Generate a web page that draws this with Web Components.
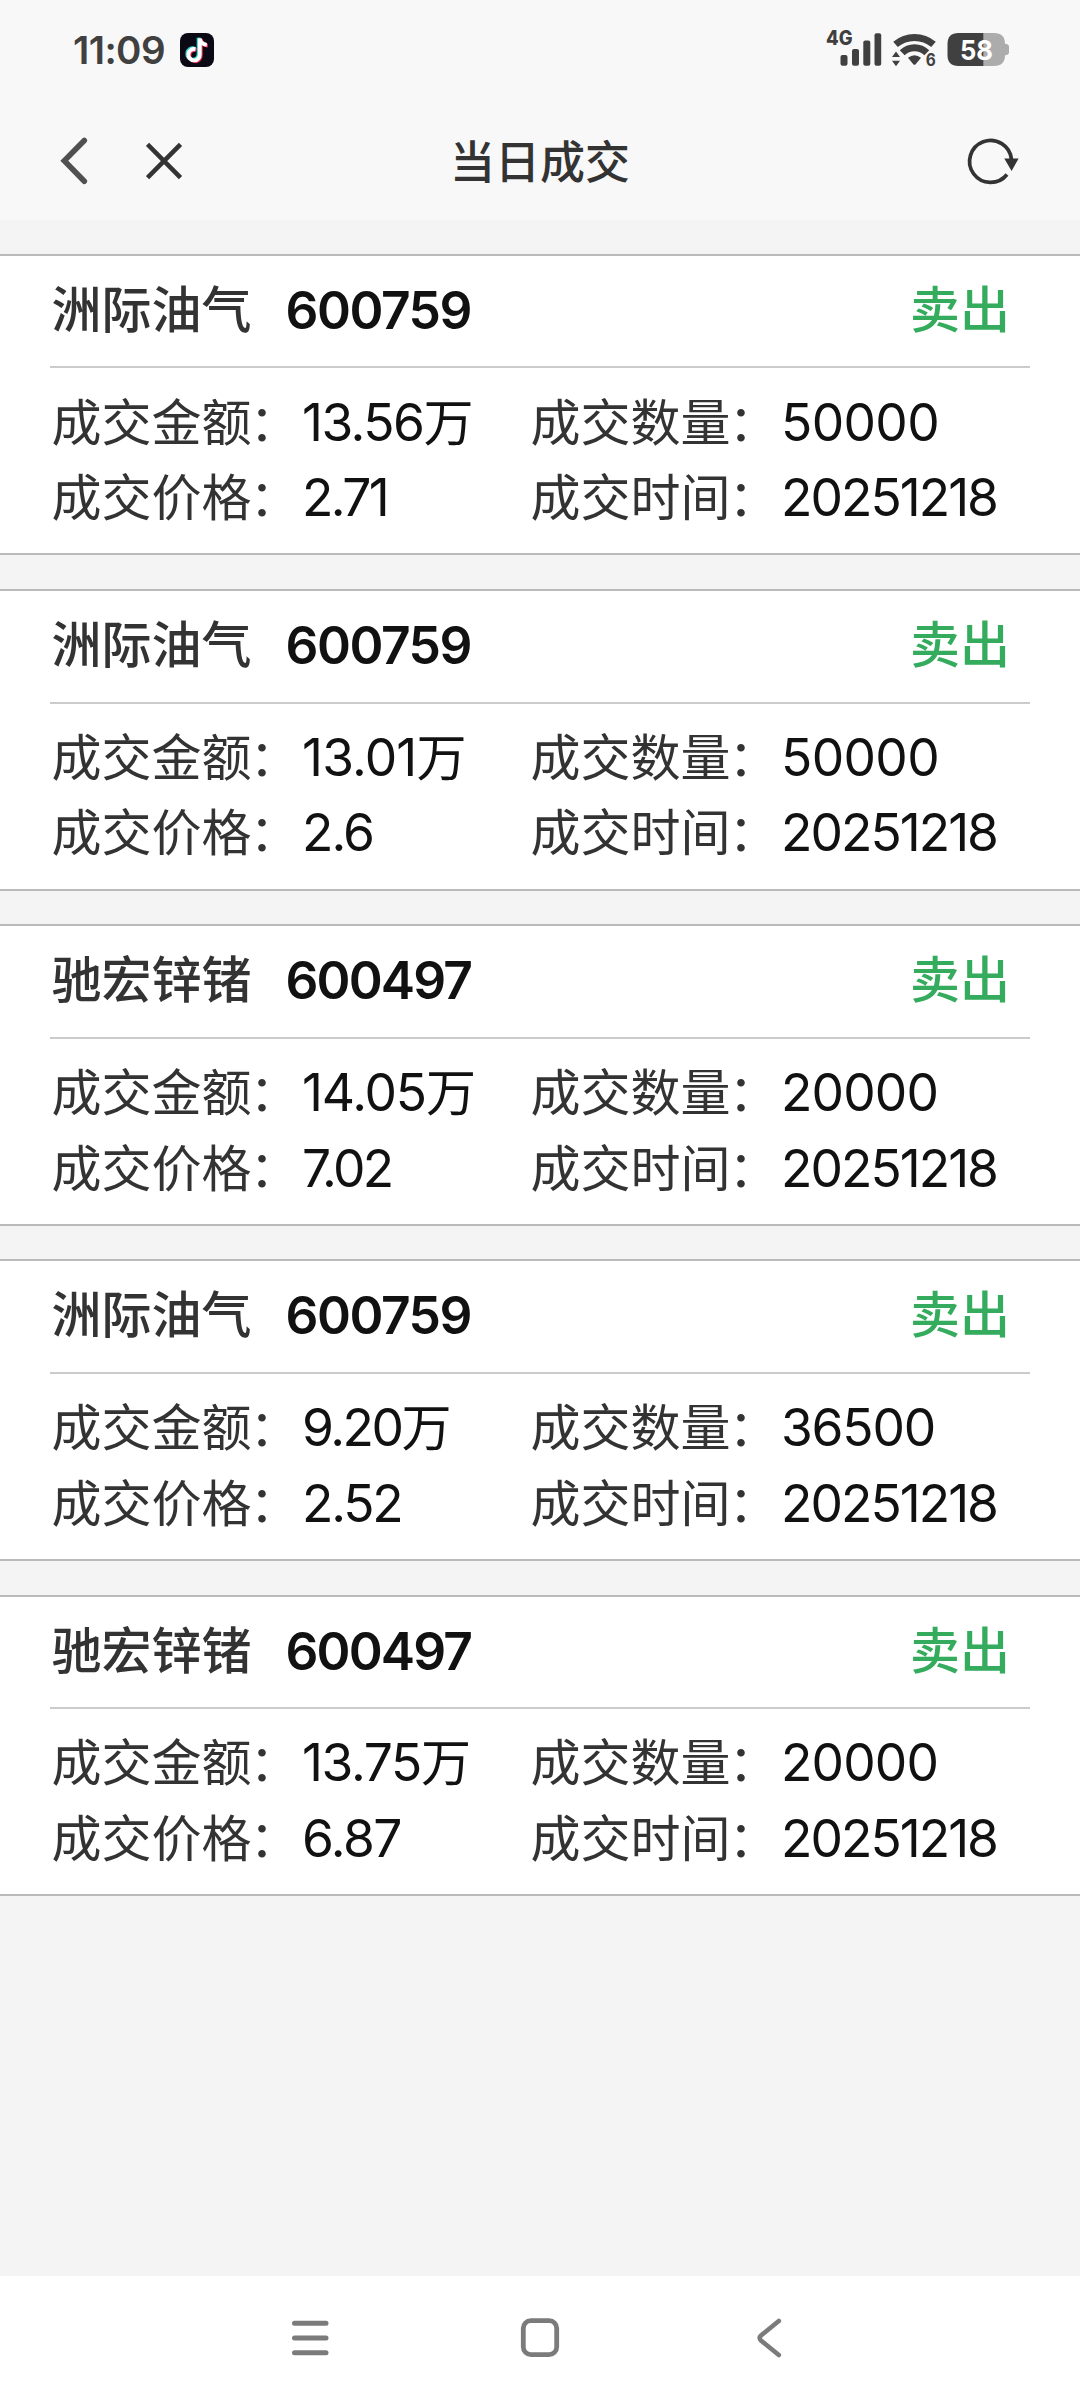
<!DOCTYPE html>
<html lang="zh-CN">
<head>
<meta charset="utf-8">
<title>当日成交</title>
<style>
html,body{margin:0;padding:0}
body{width:1080px;height:2400px;overflow:hidden;background:#f4f4f4;font-family:Inter,"Noto Sans CJK SC",sans-serif;color:#333}
</style>
</head>
<body>
<trade-app></trade-app>
<script>
const define = (name, html, init) => customElements.define(name, class extends HTMLElement {
  constructor() {
    super();
    this.attachShadow({ mode: 'open' }).innerHTML = html;
  }
  connectedCallback() { if (init) init(this, this.shadowRoot); }
});

// Text whose letter spacing is tuned so its advance equals the "width" attribute.
define('fit-text', `<style>:host{display:inline-block;white-space:nowrap;line-height:1}</style><span><slot></slot></span>`, (el, root) => {
  const w = parseFloat(el.getAttribute('width'));
  if (!w) return;
  const span = root.querySelector('span');
  span.style.letterSpacing = '0px';
  const natural = span.getBoundingClientRect().width;
  const n = el.textContent.length;
  span.style.letterSpacing = ((w - natural) / n).toFixed(3) + 'px';
});

define('status-bar', `<style>
:host{display:flex;height:100px;box-sizing:border-box;padding:0 71px 0 73px;align-items:center;background:#f8f8f8;color:#404040}
.time{font-size:38.5px;font-weight:600;width:107px;line-height:100px}
.sp{flex:1}
svg{display:block}
text{font-family:Inter,sans-serif;font-weight:700}
</style>
<div class="time"><fit-text width="92">11:09</fit-text></div>
<svg width="34" height="34" viewBox="0 0 34 34"><rect width="34" height="34" rx="8" fill="#0b0914"/>
<g fill="none" stroke-width="3.8"><path id="n" d="M15.500 16.200A5.700 5.700 0 1 0 19.800 21.500V5.500c.6 3.800 3.200 6 7 6.300" stroke="#35d6d3" transform="translate(-1.200 -.8)"/><path d="M15.500 16.200A5.700 5.700 0 1 0 19.800 21.500V5.500c.6 3.800 3.200 6 7 6.300" stroke="#ee2f55" transform="translate(1 .8)"/><path d="M15.500 16.200A5.700 5.700 0 1 0 19.800 21.500V5.500c.6 3.800 3.200 6 7 6.300" stroke="#fff"/></g></svg>
<div class="sp"></div>
<svg width="184" height="100" viewBox="825 0 184 100" fill="#404040">
<text x="826" y="45.200" font-size="20.500" style="font-weight:800" textLength="26.500" lengthAdjust="spacingAndGlyphs">4G</text>
<rect x="840.500" y="55" width="7" height="10.700" rx="2"/><rect x="852" y="49" width="7" height="16.700" rx="2"/><rect x="863.300" y="40.500" width="7" height="25.200" rx="2"/><rect x="874.500" y="33.300" width="6.700" height="32.400" rx="2"/>
<g fill="none" stroke="#404040" stroke-width="7"><path d="M895.500 44.400a29.400 29.400 0 0 1 38 0"/><path d="M902.200 52.700a17.600 17.600 0 0 1 24.600 0"/></g>
<path d="M908 57.800q6.500-5 13 0l-5.300 6.400q-1.200 1.300-2.400 0z"/>
<path d="M896 51.500l4 5.500h-8zM896 66.300l4-5.500h-8z"/>
<text x="925.800" y="66.400" font-size="17" textLength="10" lengthAdjust="spacingAndGlyphs">6</text>
<path d="M983.500 33H994q11 0 11 11v11q0 11-11 11H983.500z" fill="#acacac"/><path d="M983.500 33H958.500q-11 0-11 11v11q0 11 11 11h25z"/><path d="M1005 43.700q4 .3 4 3v5.600q0 2.700-4 3z" fill="#acacac"/>
<text x="960" y="60" font-size="27.500" fill="#fff" textLength="33" lengthAdjust="spacingAndGlyphs">58</text>
</svg>`);

define('nav-header', `<style>
:host{display:grid;grid-template-columns:1fr auto 1fr;align-items:center;height:120px;box-sizing:border-box;padding:0 60px 0 60px;background:#f8f8f8}
.left{display:flex;gap:58px;align-items:center}
.left,.right{padding-bottom:0}
.right{display:flex;justify-content:flex-end}
.title{font-size:45px;font-weight:500;color:#333;line-height:114px;padding-top:6px}
svg{display:block}
</style>
<div class="left">
<svg width="28" height="50" viewBox="60 135.500 28 50"><path d="M84.300 141L64.300 161.300L84.300 181.700" fill="none" stroke="#505050" stroke-width="5.600" stroke-linecap="round"/></svg>
<svg width="38" height="50" viewBox="146 135.500 38 50"><path d="M147.500 144.800L180.500 178.200M180.500 144.800L147.500 178.200" stroke="#333" stroke-width="4.600"/></svg>
</div>
<div class="title">当日成交</div>
<div class="right"><svg width="56" height="50" viewBox="964 135.500 56 50"><path d="M1007 175A21 21 0 1 1 1011.500 160" fill="none" stroke="#333" stroke-width="3.700"/><path d="M1004.300 159h14.300l-7 12.500z" fill="#333"/></svg></div>`);

define('trade-field', `<style>
:host{display:block;line-height:75.400px;font-size:50px;white-space:nowrap}
.label{display:inline-block;width:250.500px;color:#333}
.colon{margin-left:-2px}
.value{color:#111}
.num{font-size:51.500px;line-height:1}
</style><span class="label"><span class="text"></span><span class="colon">：</span></span><span class="value"><span class="num"></span><span class="unit"></span></span>`, (el, root) => {
  root.querySelector('.text').textContent = el.getAttribute('label');
  const num = document.createElement('fit-text');
  num.textContent = el.getAttribute('value');
  num.setAttribute('width', el.getAttribute('advance'));
  root.querySelector('.num').replaceChildren(num);
  root.querySelector('.unit').textContent = el.getAttribute('unit') || '';
});

define('trade-card', `<style>
:host{display:block;height:301.600px;box-sizing:border-box;background:#fff;border-top:2px solid #bababa;border-bottom:2px solid #bababa;padding:0 50px}
.head{display:flex;height:110.650px;line-height:109.500px;font-size:50px;padding:0 20px 0 1.500px;border-bottom:2px solid #cbcbcb}
.name{width:234px;font-weight:500;color:#333}
.code{flex:1;font-size:51.500px;font-weight:600;color:#111}
.side{font-weight:500;color:#34ab5d}
.body{display:grid;grid-template-columns:479px 1fr;padding:17.300px 0 0 1.500px}
</style>
<div class="head"><span class="name"></span><span class="code"></span><span class="side">卖出</span></div>
<div class="body"><slot></slot></div>`, (el, root) => {
  root.querySelector('.name').textContent = el.getAttribute('name');
  const code = document.createElement('fit-text');
  code.textContent = el.getAttribute('code');
  code.setAttribute('width', '185.5');
  root.querySelector('.code').replaceChildren(code);
});

define('system-nav', `<style>
:host{display:flex;height:124px;background:#fff;align-items:center;padding-left:290px;box-sizing:border-box}
svg{display:block}
.home{margin:0 194px 0 190px}
</style>
<svg width="40" height="44" viewBox="290 2316 40 44"><path d="M294.500 2323.300h31.500M294.500 2338h31.500M294.500 2352.700h31.500" stroke="#7b7b7b" stroke-width="5" stroke-linecap="round"/></svg>
<svg class="home" width="40" height="44" viewBox="520 2316 40 44"><rect x="523.300" y="2320.700" width="33.400" height="33.900" rx="7.500" fill="none" stroke="#7b7b7b" stroke-width="4.800"/></svg>
<svg width="30" height="44" viewBox="754 2316 30 44"><path d="M778.800 2321L761 2335.500Q758.300 2338 761 2340.500L778.800 2355" fill="none" stroke="#7b7b7b" stroke-width="4.600" stroke-linecap="round"/></svg>`);

const trades = [
  ['洲际油气','600759',['13.56',121.500],['50000',158],['2.71',85]],
  ['洲际油气','600759',['13.01',114.500],['50000',158],['2.6',71]],
  ['驰宏锌锗','600497',['14.05',124],['20000',157],['7.02',89.500]],
  ['洲际油气','600759',['9.20',99.500],['36500',154],['2.52',99.500]],
  ['驰宏锌锗','600497',['13.75',119],['20000',157],['6.87',99]]
];

define('trade-app', `<style>
:host{display:flex;flex-direction:column;width:1080px;height:2400px;background:#f4f4f4}
main{flex:1;display:flex;flex-direction:column;gap:33.600px;padding-top:33.800px}
</style>
<status-bar></status-bar><nav-header></nav-header>
<main>${trades.map(([name, code, amt, qty, price]) => `<trade-card name="${name}" code="${code}">
<trade-field label="成交金额" value="${amt[0]}" advance="${amt[1]}" unit="万"></trade-field>
<trade-field label="成交数量" value="${qty[0]}" advance="${qty[1]}"></trade-field>
<trade-field label="成交价格" value="${price[0]}" advance="${price[1]}"></trade-field>
<trade-field label="成交时间" value="20251218" advance="216"></trade-field>
</trade-card>`).join('')}</main>
<system-nav></system-nav>`);
</script>
</body>
</html>
